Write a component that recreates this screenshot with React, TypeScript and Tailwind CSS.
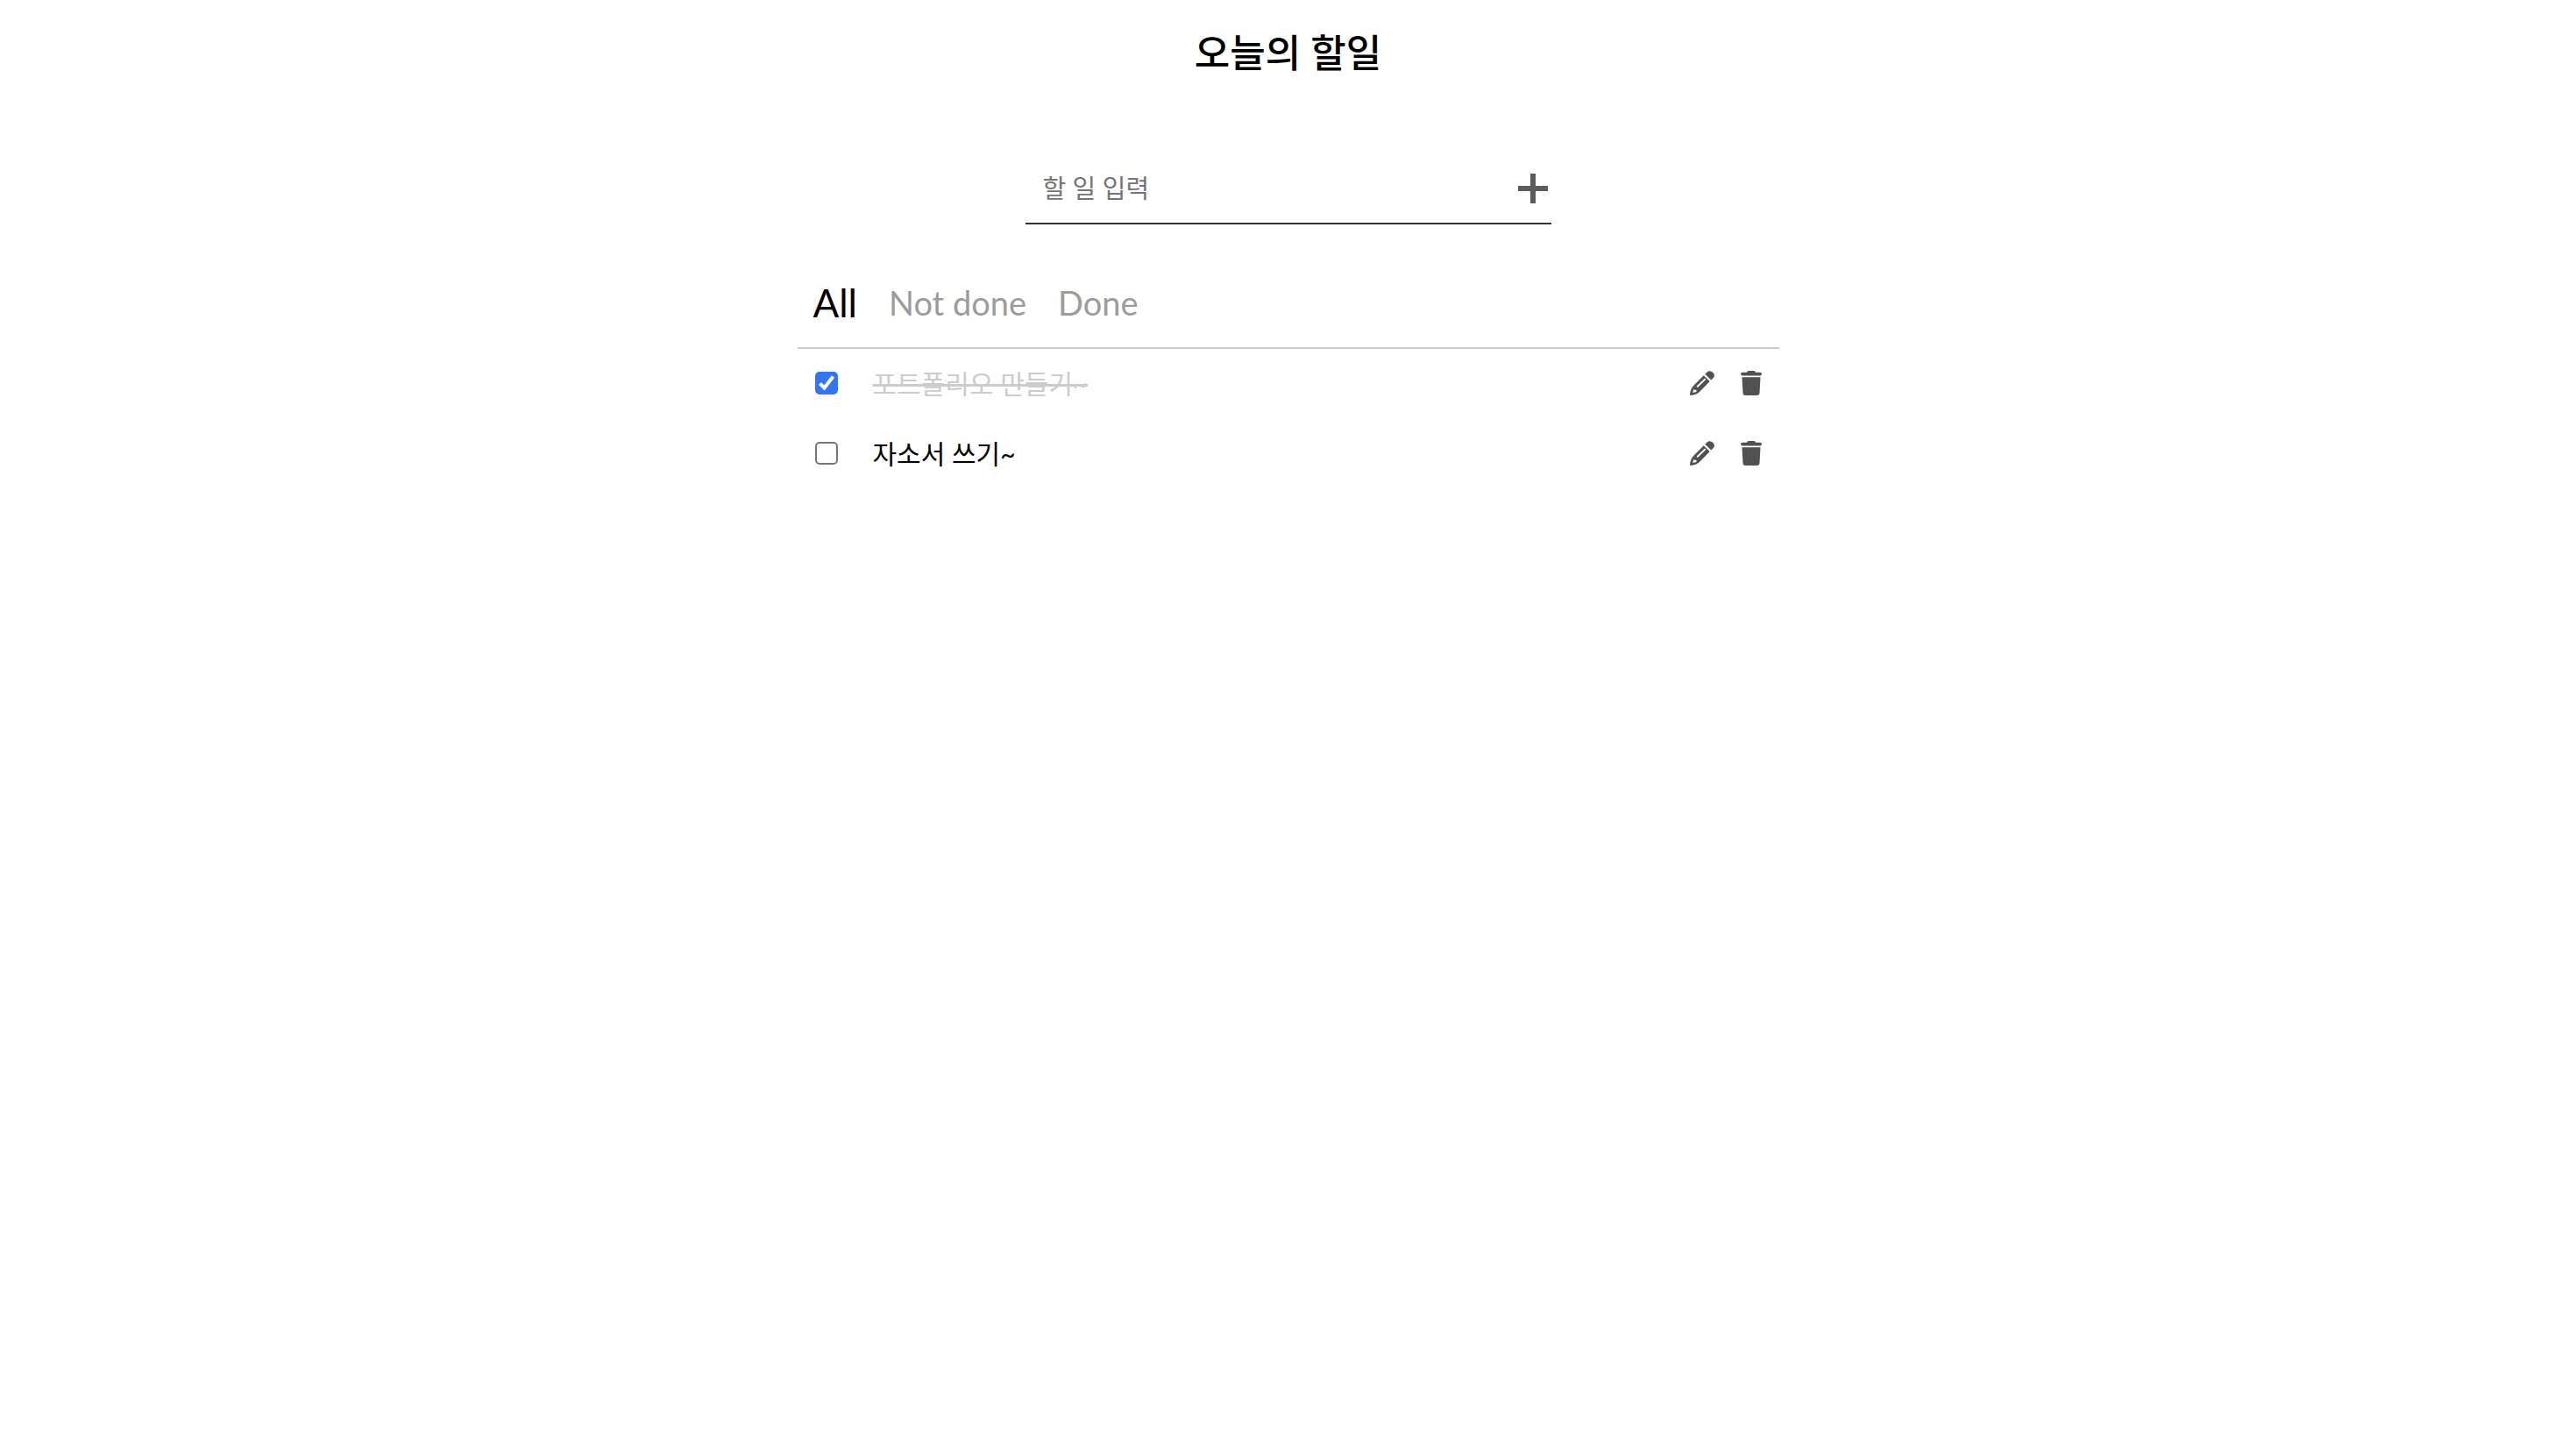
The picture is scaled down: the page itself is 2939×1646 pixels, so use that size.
import { useState } from "react";

type Filter = "All" | "Not done" | "Done";
type Todo = { id: number; text: string; done: boolean };

const filters: Filter[] = ["All", "Not done", "Done"];

function PlusIcon() {
  return (
    <svg viewBox="0 0 34 34" className="size-[34px]" fill="currentColor" aria-hidden="true">
      <path d="M14 0h6v14h14v6H20v14h-6V20H0v-6h14z" />
    </svg>
  );
}

function PencilIcon() {
  return (
    <svg viewBox="0 0 28 28" className="size-7" aria-hidden="true">
      <path
        fill="currentColor"
        fillRule="evenodd"
        d="M15.800 5.200 22.700 12.100 12 22.900Q9.800 25.200 7.600 26.200 4.300 27.700 .9 28 0 28 0 27.100 .3 23.500 1.800 20.300 2.900 18.100 4.800 16.200zM16.500 8.900 8.100 17.100q-.6.7 0 1.300t1.400 0L17.900 10.300q.5-.7 0-1.300t-1.400-.1zM4.200 21 3.200 24.900 7.300 24 7.600 22.100 5.900 21.800z"
      />
      <path
        fill="currentColor"
        d="M17.300 3.700 19.600 1.400Q22.900-1.300 26.200 1.800T26.600 8.300L24.200 10.600z"
      />
    </svg>
  );
}

function TrashIcon() {
  return (
    <svg viewBox="0 0 28 28" className="size-7" aria-hidden="true">
      <path
        fill="currentColor"
        d="M4 1.7h5Q9.300 0 11 0h6q1.700 0 2 1.700h5q2 0 2 1.900t-2 1.900H4q-2 0-2-1.900t2-1.900zM3.500 7.300h21l-1 18q-.2 2.700-2.800 2.700H7.300Q4.700 28 4.500 25.300z"
      />
    </svg>
  );
}

export default function App() {
  const [filter, setFilter] = useState<Filter>("All");
  const [draft, setDraft] = useState("");
  const [todos, setTodos] = useState<Todo[]>([
    { id: 1, text: "포트폴리오 만들기~", done: true },
    { id: 2, text: "자소서 쓰기~", done: false },
  ]);

  const visible = todos.filter(
    (t) => filter === "All" || (filter === "Done" ? t.done : !t.done),
  );

  const toggle = (id: number) =>
    setTodos(todos.map((t) => (t.id === id ? { ...t, done: !t.done } : t)));

  const edit = (todo: Todo) => {
    const text = window.prompt("할 일 입력", todo.text);
    if (text) setTodos(todos.map((t) => (t.id === todo.id ? { ...t, text } : t)));
  };

  return (
    <main className="flex min-h-screen flex-col items-center bg-white px-4 font-['Lato','Noto_Sans_CJK_KR',sans-serif] text-black">
      <h1 className="pt-7 text-[44px] leading-[64px] font-medium">오늘의 할일</h1>

      <form
        className="mt-[84px] flex h-20 w-full max-w-[600px] items-center border-b-2 border-[#333] pr-1 pl-5"
        onSubmit={(e) => {
          e.preventDefault();
          if (!draft.trim()) return;
          setTodos([...todos, { id: Date.now(), text: draft.trim(), done: false }]);
          setDraft("");
        }}
      >
        <input
          type="text"
          aria-label="할 일 입력"
          placeholder="할 일 입력"
          value={draft}
          onChange={(e) => setDraft(e.target.value)}
          className="min-w-0 flex-1 text-[29px] outline-none placeholder:text-[#757575]"
        />
        <button type="submit" aria-label="추가" className="text-[#5c5c5c]">
          <PlusIcon />
        </button>
      </form>

      <section className="mt-10 w-full max-w-[1120px]">
        <nav className="flex h-[102px] items-center gap-9 border-b-2 border-[#ccc] px-[18px] pb-0.5">
          {filters.map((name) => (
            <button
              key={name}
              type="button"
              aria-pressed={filter === name}
              onClick={() => setFilter(name)}
              className={filter === name ? "text-[44px]" : "text-[38px] text-[#9c9c9c]"}
            >
              {name}
            </button>
          ))}
        </nav>

        <ul>
          {visible.map((todo) => (
            <li key={todo.id} className="flex h-20 items-center pr-[18px] pb-0.5 pl-5">
              <span className="relative flex">
                <input
                  id={`todo-${todo.id}`}
                  type="checkbox"
                  checked={todo.done}
                  onChange={() => toggle(todo.id)}
                  className="peer size-[26px] appearance-none rounded-[5px] border-2 border-[#767676] bg-white checked:border-[#3375f6] checked:bg-[#3375f6]"
                />
                <svg
                  viewBox="0 0 26 26"
                  className="pointer-events-none invisible absolute inset-0 size-[26px] peer-checked:visible"
                  aria-hidden="true"
                >
                  <path d="M5.500 13.500 10.500 18.500 20.500 5.500" fill="none" stroke="#fff" strokeWidth="4" />
                </svg>
              </span>
              <label
                htmlFor={`todo-${todo.id}`}
                className={
                  todo.done
                    ? "ml-10 flex-1 text-[30px] text-[#ccc] line-through"
                    : "ml-10 flex-1 text-[30px]"
                }
              >
                {todo.text}
              </label>
              <div className="flex gap-7 text-[#515151]">
                <button type="button" aria-label="수정" onClick={() => edit(todo)}>
                  <PencilIcon />
                </button>
                <button
                  type="button"
                  aria-label="삭제"
                  onClick={() => setTodos(todos.filter((t) => t.id !== todo.id))}
                >
                  <TrashIcon />
                </button>
              </div>
            </li>
          ))}
        </ul>
      </section>
    </main>
  );
}
